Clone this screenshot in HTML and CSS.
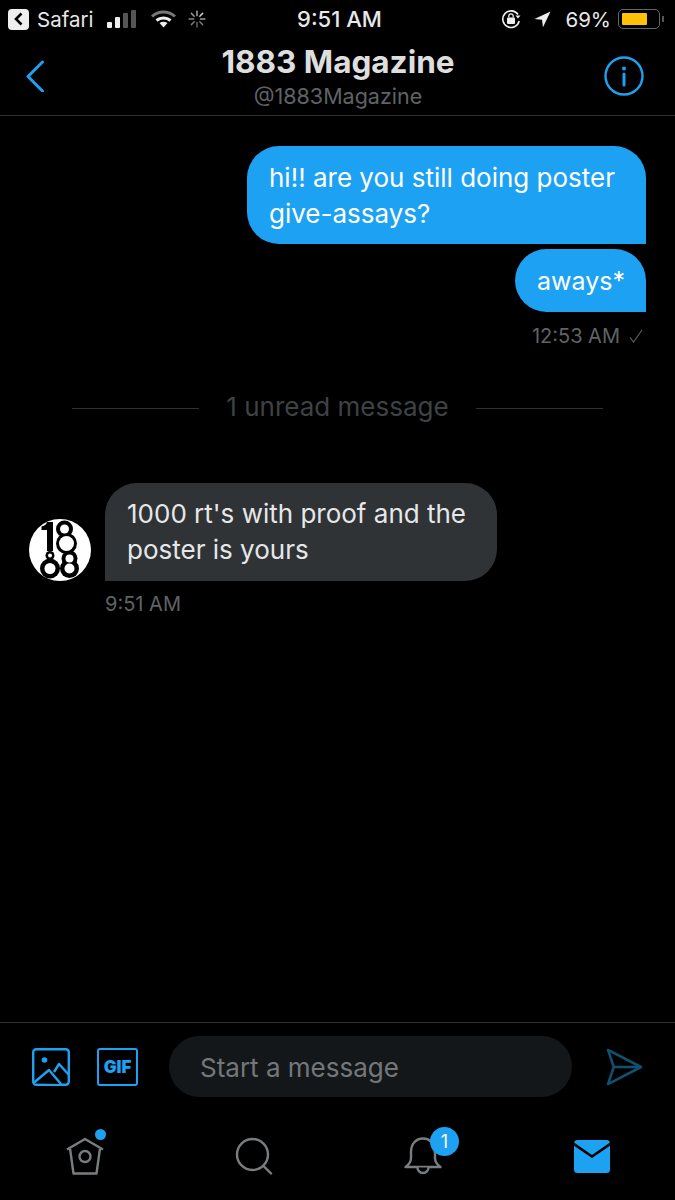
FILE: index.html
```html
<!DOCTYPE html>
<html lang="en">
<head>
  <meta charset="UTF-8" />
  <meta name="viewport" content="width=device-width, initial-scale=1.0"/>
  <title>1883 Magazine</title>
  <link rel="stylesheet" href="styles.css">
</head>
<body>
  <div class="status">
    <div class="status-left">
      <span class="back-app"><svg width="11" height="14" viewBox="0 0 11 14"><path d="M8.500 1.500 3 7l5.500 5.500" fill="none" stroke="#000" stroke-width="2.600"/></svg></span>
      <span>Safari</span>
      <svg class="signal" width="30" height="19" viewBox="0 0 30 19">
        <rect x="0" y="12" width="5" height="6" rx="1" fill="#eee"/>
        <rect x="8" y="7" width="5" height="11" rx="1" fill="#eee"/>
        <rect x="16" y="3" width="5" height="15" rx="1" fill="#555"/>
        <rect x="24" y="0" width="5" height="18" rx="1" fill="#555"/>
      </svg>
      <svg class="wifi" width="25" height="18" viewBox="0 0 25 18">
        <path d="M1 6.500C7.500 .5 17.500 .5 24 6.500" fill="none" stroke="#777" stroke-width="3"/>
        <path d="M5.500 10.500c4-3.500 10-3.500 14 0" fill="none" stroke="#eee" stroke-width="3"/>
        <path d="M8.500 13 12.500 17.500 16.500 13c-2.500-1.800-5.500-1.800-8 0z" fill="#eee"/>
      </svg>
      <svg class="spinner" width="18" height="18" viewBox="0 0 16 16" stroke-width="1.300" stroke-linecap="round">
        <path d="M8 1v4" stroke="#aaa"/><path d="M13 3 10.500 5.500" stroke="#ccc"/><path d="M15 8h-4" stroke="#999"/><path d="M13 13l-2.500-2.500" stroke="#777"/>
        <path d="M8 15v-4" stroke="#666"/><path d="M3 13l2.500-2.500" stroke="#777"/><path d="M1 8h4" stroke="#888"/><path d="M3 3l2.500 2.500" stroke="#999"/>
      </svg>
    </div>
    <div class="status-time">9:51 AM</div>
    <div class="status-right">
      <svg class="lock" width="21" height="20" viewBox="0 0 21 20">
        <path d="M17 5.500A8.300 8.300 0 1 0 18.200 12" fill="none" stroke="#eee" stroke-width="1.600"/>
        <path d="M14.500 6.500h5l-2.500 3z" fill="#eee"/>
        <rect x="6" y="8.500" width="8" height="6.500" rx="1" fill="#eee"/>
        <path d="M7.800 8.500V7a2.200 2.200 0 0 1 4.400 0v1.500" fill="none" stroke="#eee" stroke-width="1.300"/>
      </svg>
      <svg class="arrow" width="17" height="17" viewBox="0 0 18 18"><path d="M17.500 .5 .5 8.500l8 .8 1 8z" fill="#eee"/></svg>
      <span class="battery-pct">69%</span>
      <div class="battery"><div class="battery-fill"></div></div>
      <div class="battery-cap"></div>
    </div>
  </div>

  <header class="nav">
    <svg class="nav-back" width="20" height="32" viewBox="0 0 20 32"><path d="M17.500 2 3 16.500 17.500 31" fill="none" stroke="#1da1f2" stroke-width="3" stroke-linecap="round" stroke-linejoin="round"/></svg>
    <div class="nav-title">
      <div class="nav-name">1883 Magazine</div>
      <div class="nav-handle">@1883Magazine</div>
    </div>
    <svg class="nav-info" width="40" height="40" viewBox="0 0 40 40">
      <circle cx="20" cy="20" r="18.500" fill="none" stroke="#1da1f2" stroke-width="2.400"/>
      <circle cx="20" cy="12.500" r="2" fill="#1da1f2"/>
      <path d="M20 18v11" stroke="#1da1f2" stroke-width="3" stroke-linecap="round"/>
    </svg>
  </header>

  <main class="thread">
    <div class="bubble bubble-out bubble-first">hi!! are you still doing poster give-assays?</div>
    <div class="bubble bubble-out bubble-second">aways*</div>
    <div class="meta meta-out">
      <span>12:53 AM</span>
      <svg width="14" height="14" viewBox="0 0 14 14"><path d="M1 8.500 4.500 13 13 1" fill="none" stroke="#5b5f63" stroke-width="1.200"/></svg>
    </div>

    <div class="unread">
      <span class="unread-line"></span>
      <span class="unread-text">1 unread message</span>
      <span class="unread-line"></span>
    </div>

    <div class="incoming">
      <svg class="avatar" width="62" height="62" viewBox="0 0 62 62">
        <circle cx="31" cy="31" r="31" fill="#fff"/>
        <path d="M12.500 7.500C16 7 17.500 5 18 3h6v29h-6V11h-5.500z" fill="#000"/>
        <circle cx="35.500" cy="10" r="8.500"/>
        <circle cx="37.500" cy="24.500" r="10.500"/>
        <circle cx="21" cy="36.500" r="4.500"/>
        <circle cx="21" cy="49.500" r="10"/>
        <circle cx="40.500" cy="39.500" r="8"/>
        <circle cx="40.500" cy="49.500" r="9.500"/>
        <circle cx="35.500" cy="10" r="4.500" fill="#fff"/>
        <circle cx="37.500" cy="24.500" r="7.500" fill="#fff"/>
        <circle cx="21" cy="36.500" r="2" fill="#fff"/>
        <circle cx="21" cy="49.500" r="5.500" fill="#fff"/>
        <circle cx="40.500" cy="39.500" r="4" fill="#fff"/>
        <circle cx="40.500" cy="49.500" r="5" fill="#fff"/>
      </svg>
      <div class="incoming-body">
        <div class="bubble bubble-in">1000 rt's with proof and the poster is yours</div>
        <div class="meta">9:51 AM</div>
      </div>
    </div>
  </main>

  <div class="composer">
    <svg class="tool" width="38" height="38" viewBox="0 0 38 38" fill="none" stroke="#1da1f2" stroke-width="2.400" stroke-linejoin="round">
      <rect x="1.200" y="1.200" width="35.600" height="35.600" rx="3"/>
      <circle cx="12.500" cy="12" r="2.800" fill="#1da1f2" stroke="none"/>
      <path d="M1.500 35 17 22l12 14"/>
      <path d="M22 24l5-8 10 11"/>
    </svg>
    <div class="gif"><span>GIF</span></div>
    <div class="compose-input">Start a message</div>
    <svg class="send" width="37" height="38" viewBox="0 0 38 38" fill="none" stroke="#11506f" stroke-width="2.600" stroke-linejoin="round">
      <path d="M2 1.500 36 19 2 36.500 8 19z"/>
      <path d="M8 19h28"/>
    </svg>
  </div>

  <nav class="tabs">
    <div class="tab">
      <svg width="38" height="38" viewBox="0 0 38 38" fill="none" stroke="#7a7d80" stroke-width="2.400" stroke-linejoin="round">
        <path d="M1 12.500 19 2 37 12.500"/>
        <path d="M4 11.500 7.500 36.500h23L34 11.500"/>
        <circle cx="19" cy="19.500" r="5.500"/>
      </svg>
      <span class="dot"></span>
    </div>
    <div class="tab">
      <svg width="38" height="38" viewBox="0 0 38 38" fill="none" stroke="#7a7d80" stroke-width="2.400" stroke-linecap="round">
        <circle cx="17.500" cy="17.500" r="15.500"/>
        <path d="M28.500 29 36 36.500"/>
      </svg>
    </div>
    <div class="tab">
      <svg width="38" height="38" viewBox="0 0 38 38" fill="none" stroke="#7a7d80" stroke-width="2.400" stroke-linejoin="round" stroke-linecap="round">
        <path d="M1.500 30c3-2 5.500-4 5.500-9v-6C7 7 12 1.500 19 1.500S31 7 31 15v6c0 5 2.500 7 5.500 9z"/>
        <path d="M13.500 30.500a5.500 5.500 0 0 0 11 0"/>
      </svg>
      <span class="count">1</span>
    </div>
    <div class="tab">
      <svg class="mail" width="36" height="33" viewBox="0 0 36 33">
        <rect width="36" height="33" rx="3.500" fill="#1da1f2"/>
        <path d="M-1 3.500 18 16.500 37 3.500" fill="none" stroke="#000" stroke-width="2.600"/>
      </svg>
    </div>
  </nav>
</body>
</html>
```

FILE: styles.css
```css
* {
  box-sizing: border-box;
}
body {
  margin: 0;
  height: 1200px;
  display: flex;
  flex-direction: column;
  overflow: hidden;
  background: #000;
  color: #eee;
  font-family: Inter, 'Noto Sans', sans-serif;
}
svg {
  display: block;
  flex: none;
  fill: #000;
}

/* status bar */
.status {
  height: 38px;
  padding: 0 11px 0 8px;
  display: grid;
  grid-template-columns: 1fr auto 1fr;
  align-items: center;
  font-size: 20.500px;
  color: #e8e8e8;
}
.status-left,
.status-right {
  display: flex;
  align-items: center;
}
.status-right {
  justify-content: flex-end;
}
.back-app {
  width: 21px;
  height: 21px;
  margin-right: 8px;
  border-radius: 4px;
  background: #eee;
  display: flex;
  align-items: center;
  justify-content: center;
}
.signal {
  margin-left: 14px;
}
.wifi {
  margin-left: 14px;
}
.spinner {
  margin-left: 12px;
}
.status-time {
  margin-left: 7px;
  font-size: 22px;
  font-weight: 500;
}
.arrow {
  margin-left: 12px;
}
.battery-pct {
  margin-left: 14px;
}
.battery {
  width: 42px;
  height: 20px;
  margin-left: 7px;
  padding: 3px;
  border: 1px solid #666;
  border-radius: 5px;
}
.battery-fill {
  width: 25px;
  height: 12px;
  border-radius: 1px;
  background: #ffc107;
}
.battery-cap {
  width: 2px;
  height: 6px;
  margin-left: 2px;
  background: #555;
}

/* nav */
.nav {
  height: 78px;
  padding: 0 31px 2px 25px;
  display: grid;
  grid-template-columns: 1fr auto 1fr;
  align-items: center;
  border-bottom: 1px solid #2f3133;
}
.nav-info {
  justify-self: end;
}
.nav-title {
  margin: 7px 0 0 7px;
  text-align: center;
}
.nav-name {
  font-size: 31.500px;
  font-weight: 700;
  line-height: 34px;
  color: #dedede;
}
.nav-handle {
  font-size: 21.500px;
  line-height: 34px;
  color: #5f6366;
}

/* thread */
.thread {
  flex: 1;
  padding: 30px 29px 0;
  display: flex;
  flex-direction: column;
}
.bubble {
  font-size: 26px;
  line-height: 36px;
  padding: 14px 22px;
  border-radius: 32px;
}
.bubble-out {
  align-self: flex-end;
  background: #1da1f2;
  color: #fff;
  border-bottom-right-radius: 0;
}
.bubble-first {
  width: 399px;
  height: 98px;
  margin-bottom: 5px;
}
.bubble-second {
  width: 131px;
  height: 63px;
  font-size: 25px;
}
.bubble-in {
  width: 392px;
  height: 98px;
  padding-top: 13px;
  background: #2f3336;
  color: #e6e7e8;
  border-bottom-left-radius: 0;
}
.meta {
  font-size: 20px;
  line-height: 24px;
  color: #5f6366;
}
.meta-out {
  align-self: flex-end;
  margin-top: 12px;
  display: flex;
  align-items: center;
  gap: 9px;
  padding-right: 3px;
}
.unread {
  margin-top: 44px;
  padding: 0 43px;
  display: flex;
  align-items: center;
  gap: 27px;
  color: #3e4245;
  font-size: 26px;
  line-height: 30px;
}
.unread-line {
  flex: 1;
  height: 1px;
  margin-top: 3px;
  background: #2f3133;
}
.incoming {
  margin-top: 61px;
  display: flex;
  gap: 14px;
}
.avatar {
  margin-top: 36px;
}
.incoming-body .meta {
  margin-top: 11px;
}

/* composer */
.composer {
  height: 76px;
  padding: 13px 32px 0 32px;
  display: flex;
  align-items: flex-start;
  border-top: 1px solid #2f3133;
}
.tool {
  margin-top: 12px;
}
.gif {
  width: 41px;
  height: 38px;
  margin: 12px 0 0 27px;
  border: 2.400px solid #1da1f2;
  border-radius: 3px;
  display: flex;
  align-items: center;
  justify-content: center;
  color: #1da1f2;
  font-size: 17px;
  font-weight: 900;
}
.compose-input {
  width: 403px;
  height: 61px;
  margin-left: 31px;
  padding-left: 31px;
  border-radius: 31px;
  background: #14171a;
  color: #74777a;
  font-size: 26px;
  line-height: 63px;
}
.send {
  margin: 12px 0 0 34px;
}

/* tabs */
.tabs {
  flex: none;
  height: 102px;
  padding: 0 64px 0 66px;
  display: flex;
  justify-content: space-between;
  align-items: flex-start;
}
.tab {
  position: relative;
  width: 38px;
  margin-top: 39px;
  display: flex;
  justify-content: center;
}
.mail {
  margin-top: 3px;
}
.dot {
  position: absolute;
  top: -8px;
  right: -2px;
  width: 11px;
  height: 11px;
  border-radius: 50%;
  background: #1da1f2;
}
.count {
  position: absolute;
  top: -10px;
  left: 26px;
  width: 29px;
  height: 29px;
  border-radius: 50%;
  background: #1da1f2;
  color: #fff;
  font-size: 18px;
  line-height: 29px;
  text-align: center;
}
```
